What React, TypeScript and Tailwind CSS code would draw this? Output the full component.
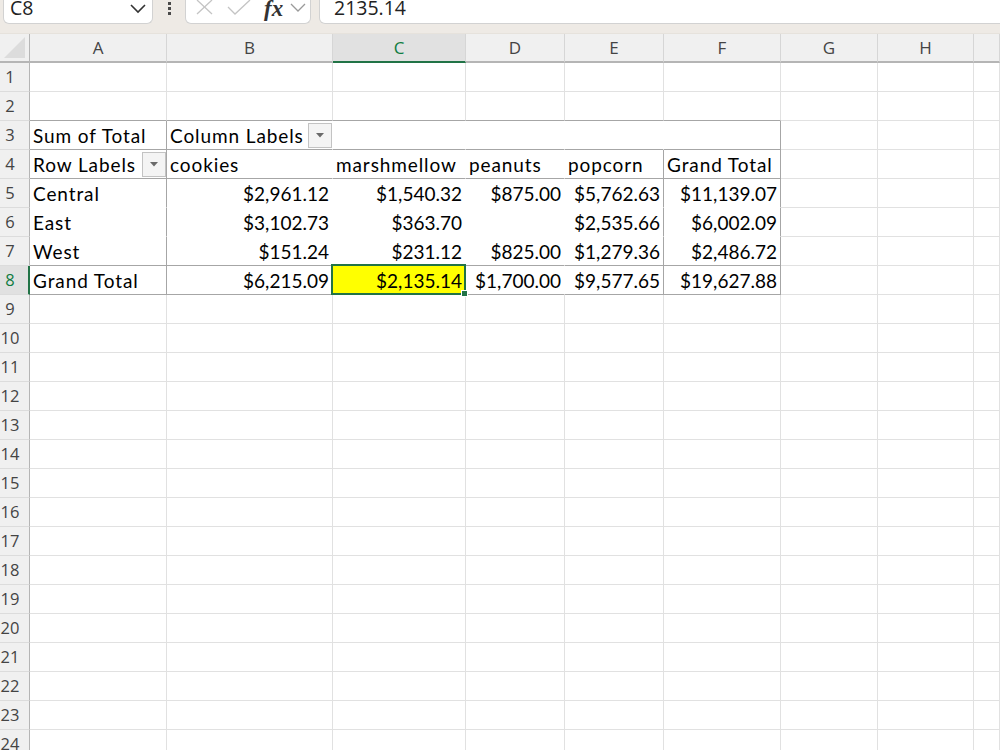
import React from "react";

const LETTERS = ["A", "B", "C", "D", "E", "F", "G", "H", ""];

type CellDef = { t?: string; r?: boolean; dd?: boolean };

const DATA: Record<number, CellDef[]> = {
  3: [{ t: "Sum of Total" }, { t: "Column Labels", dd: true }],
  4: [
    { t: "Row Labels", dd: true },
    { t: "cookies" },
    { t: "marshmellow" },
    { t: "peanuts" },
    { t: "popcorn" },
    { t: "Grand Total" },
  ],
  5: [
    { t: "Central" },
    { t: "$2,961.12", r: true },
    { t: "$1,540.32", r: true },
    { t: "$875.00", r: true },
    { t: "$5,762.63", r: true },
    { t: "$11,139.07", r: true },
  ],
  6: [
    { t: "East" },
    { t: "$3,102.73", r: true },
    { t: "$363.70", r: true },
    { t: "" },
    { t: "$2,535.66", r: true },
    { t: "$6,002.09", r: true },
  ],
  7: [
    { t: "West" },
    { t: "$151.24", r: true },
    { t: "$231.12", r: true },
    { t: "$825.00", r: true },
    { t: "$1,279.36", r: true },
    { t: "$2,486.72", r: true },
  ],
  8: [
    { t: "Grand Total" },
    { t: "$6,215.09", r: true },
    { t: "$2,135.14", r: true },
    { t: "$1,700.00", r: true },
    { t: "$9,577.65", r: true },
    { t: "$19,627.88", r: true },
  ],
};

const R_CLS = {
  grid: "border-r-[#e1e1e1]",
  piv: "border-r-[#a6a6a6]",
  none: "border-r-white",
};
const B_CLS = {
  grid: "border-b-[#e1e1e1]",
  piv: "border-b-[#a6a6a6]",
  none: "border-b-white",
};

function rightKind(r: number, c: number): keyof typeof R_CLS {
  if (r >= 3 && r <= 8 && c <= 5) {
    if (c === 0 || c === 5) return "piv";
    if (c === 4 && r >= 4) return "piv";
    return "none";
  }
  return "grid";
}
function bottomKind(r: number, c: number): keyof typeof B_CLS {
  if (c <= 5) {
    if (r === 2) return "piv";
    if (r === 3 || r === 4 || r === 7 || r === 8) return "piv";
    if (r === 5 || r === 6) return "none";
  }
  return "grid";
}

const ROW_GRID =
  "grid grid-cols-[30px_137px_166px_133px_99px_99px_117px_97px_96px_1fr]";

function Dropdown() {
  return (
    <div className="absolute right-0 top-[2px] w-[24px] h-[25px] bg-[#f4f4f4] border border-[#c3c3c3] flex items-center justify-center">
      <svg width="8" height="5" viewBox="0 0 8 5">
        <polygon points="0,0 8,0 4,4.5" fill="#6a6a6a" />
      </svg>
    </div>
  );
}

function Row({ r }: { r: number }) {
  const defs = DATA[r] || [];
  const selRow = r === 8;
  return (
    <div className={`${ROW_GRID} h-[29px]`}>
      <div
        className={`h-[29px] border-b border-b-[#dcdcdc] ${
          selRow
            ? "bg-[#e1e1e1] border-r-2 border-r-[#217346] text-[#107c41]"
            : "bg-[#f0f0f0] border-r border-r-[#b5b5b5] text-[#444]"
        } flex items-center`}
      >
        <span className="w-[20px] text-center text-[16.5px] leading-none font-['Open_Sans',sans-serif]">
          {r}
        </span>
      </div>
      {LETTERS.map((_, c) => {
        const d = defs[c];
        const sel = r === 8 && c === 2;
        return (
          <div
            key={c}
            className={`relative h-[29px] border-r border-b ${R_CLS[rightKind(r, c)]} ${
              B_CLS[bottomKind(r, c)]
            } ${sel ? "bg-[#ffff00]" : "bg-white"} flex items-end pb-[1px] ${
              d && d.r ? "justify-end pr-[3px]" : "pl-[3px] tracking-[0.9px]"
            } whitespace-nowrap text-[19px] leading-[24px] text-black font-['Lato',sans-serif]`}
          >
            {d && d.t ? <span className="relative z-0">{d.t}</span> : null}
            {d && d.dd ? <Dropdown /> : null}
            {sel ? (
              <div className="absolute left-[-2px] top-[-2px] right-[-1px] bottom-[-1px] border-2 border-[#217346] z-10">
                <div className="absolute right-[-4px] bottom-[-4px] w-[7px] h-[7px] bg-[#217346] border border-white" />
              </div>
            ) : null}
          </div>
        );
      })}
    </div>
  );
}

export default function App() {
  const rows = Array.from({ length: 24 }, (_, i) => i + 1);
  return (
    <div className="w-[1000px] h-[750px] overflow-hidden bg-white font-['Open_Sans',sans-serif]">
      {/* formula bar */}
      <div className="h-[34px] bg-[#eeeae5] flex items-start border-b border-b-[#e6e2dc]">
        <div className="ml-[3px] w-[150px] h-[24px] bg-white border border-t-0 border-[#d2d2d2] rounded-b-[6px] flex items-start justify-between">
          <span className="ml-[6px] -mt-[4px] text-[19.5px] leading-[24px] text-[#222]">
            C8
          </span>
          <svg width="16" height="12" viewBox="0 0 16 12" className="mr-[6px] mt-[2px]">
            <polyline points="1,3 8,10 15,3" fill="none" stroke="#333" strokeWidth="1.6" />
          </svg>
        </div>
        <div className="w-[32px] h-[24px] flex flex-col items-center pt-[2px] gap-[2px]">
          <div className="w-[3px] h-[3px] bg-[#4a4a4a]" />
          <div className="w-[3px] h-[3px] bg-[#4a4a4a]" />
          <div className="w-[3px] h-[3px] bg-[#4a4a4a]" />
        </div>
        <div className="w-[126px] h-[24px] bg-white border border-t-0 border-[#d2d2d2] rounded-b-[6px] flex items-start">
          <svg width="20" height="18" viewBox="0 0 20 18" className="ml-[9px] -mt-[1px]">
            <line x1="2" y1="1" x2="17" y2="15" stroke="#c4c4c4" strokeWidth="1.3" />
            <line x1="17" y1="1" x2="2" y2="15" stroke="#c4c4c4" strokeWidth="1.3" />
          </svg>
          <svg width="26" height="18" viewBox="0 0 26 18" className="ml-[11px] -mt-[1px]">
            <polyline points="2,8 9,15 24,1" fill="none" stroke="#c4c4c4" strokeWidth="1.3" />
          </svg>
          <span className="ml-[12px] -mt-[6px] text-[23px] leading-[30px] italic font-semibold text-[#333] font-['Liberation_Serif',serif]">
            fx
          </span>
          <svg width="16" height="12" viewBox="0 0 16 12" className="ml-[7px] mt-[2px]">
            <polyline points="1,2 8,9 15,2" fill="none" stroke="#9a9a9a" strokeWidth="1.3" />
          </svg>
        </div>
        <div className="ml-[8px] flex-1 mr-[-10px] h-[24px] bg-white border border-t-0 border-[#d2d2d2] rounded-bl-[6px] flex items-start">
          <span className="ml-[14px] -mt-[4px] text-[19.5px] leading-[24px] text-[#222]">
            2135.14
          </span>
        </div>
      </div>
      {/* column header */}
      <div className={`${ROW_GRID} h-[29px]`}>
        <div className="bg-[#f0f0f0] border-r border-r-[#b5b5b5] border-b-2 border-b-[#b5b5b5] relative">
          <svg width="24" height="24" viewBox="0 0 24 24" className="absolute right-[2px] bottom-[1px]">
            <polygon points="22,1 22,22 1,22" fill="#dcdcdc" />
          </svg>
        </div>
        {LETTERS.map((L, c) => {
          const sel = c === 2;
          return (
            <div
              key={c}
              className={`flex items-center justify-center text-[17px] leading-none border-b-2 ${
                sel
                  ? "bg-[#e1e1e1] border-b-[#217346] text-[#107c41]"
                  : "bg-[#f0f0f0] border-b-[#b5b5b5] text-[#444]"
              } border-r border-r-[#d6d6d6]`}
            >
              {L}
            </div>
          );
        })}
      </div>
      {rows.map((r) => (
        <Row key={r} r={r} />
      ))}
    </div>
  );
}
